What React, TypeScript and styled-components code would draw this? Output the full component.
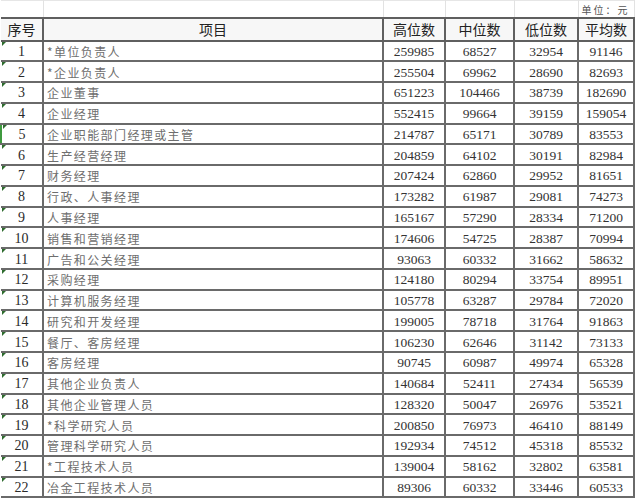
import React from "react";
import styled, { createGlobalStyle } from "styled-components";

const GlobalStyle = createGlobalStyle`
  html, body {
    margin: 0;
    padding: 0;
    background: #ffffff;
    overflow: hidden;
  }
`;

type Row = [string, string, number, number, number, number];

const rows: Row[] = [
  ["1", "*单位负责人", 259985, 68527, 32954, 91146],
  ["2", "*企业负责人", 255504, 69962, 28690, 82693],
  ["3", "企业董事", 651223, 104466, 38739, 182690],
  ["4", "企业经理", 552415, 99664, 39159, 159054],
  ["5", "企业职能部门经理或主管", 214787, 65171, 30789, 83553],
  ["6", "生产经营经理", 204859, 64102, 30191, 82984],
  ["7", "财务经理", 207424, 62860, 29952, 81651],
  ["8", "行政、人事经理", 173282, 61987, 29081, 74273],
  ["9", "人事经理", 165167, 57290, 28334, 71200],
  ["10", "销售和营销经理", 174606, 54725, 28387, 70994],
  ["11", "广告和公关经理", 93063, 60332, 31662, 58632],
  ["12", "采购经理", 124180, 80294, 33754, 89951],
  ["13", "计算机服务经理", 105778, 63287, 29784, 72020],
  ["14", "研究和开发经理", 199005, 78718, 31764, 91863],
  ["15", "餐厅、客房经理", 106230, 62646, 31142, 73133],
  ["16", "客房经理", 90745, 60987, 49974, 65328],
  ["17", "其他企业负责人", 140684, 52411, 27434, 56539],
  ["18", "其他企业管理人员", 128320, 50047, 26976, 53521],
  ["19", "*科学研究人员", 200850, 76973, 46410, 88149],
  ["20", "管理科学研究人员", 192934, 74512, 45318, 85532],
  ["21", "*工程技术人员", 139004, 58162, 32802, 63581],
  ["22", "冶金工程技术人员", 89306, 60332, 33446, 60533],
];

const colWidths = [42, 340, 62, 69, 64, 56];
const headers = ["序号", "项目", "高位数", "中位数", "低位数", "平均数"];

const Sheet = styled.table`
  border-collapse: collapse;
  table-layout: fixed;
  width: 633px;
  font-family: "Liberation Serif", "Times New Roman", serif;
`;

const TopRow = styled.tr`
  height: 17px;
`;

const TopCell = styled.td<{ $first?: boolean }>`
  border-left: ${(p) => (p.$first ? "none" : "1px solid #e2e2e2")};
  border-right: 1px solid #e2e2e2;
  border-top: 1px solid #e6e6e6;
  padding: 0 4px 0 0;
  text-align: right;
  vertical-align: bottom;
  font-family: "Noto Sans CJK SC", sans-serif;
  font-size: 10px;
  letter-spacing: 2px;
  color: #555;
  line-height: 14px;
`;

const HeadRow = styled.tr`
  height: 23px;
  background: #f7f7f7;
`;

const HeadCell = styled.th`
  border: 2px solid #5f5f5f;
  padding: 0;
  font-family: "Noto Sans CJK SC", sans-serif;
  font-weight: 400;
  font-size: 14px;
  line-height: 18px;
  color: #222;
  text-align: center;
  &:first-child {
    border-left: none;
  }
`;

const BodyRow = styled.tr`
  height: 20.77px;
`;

const IndexCell = styled.td<{ $active?: boolean }>`
  position: relative;
  border: 2px solid #6a6a6a;
  border-left: ${(p) => (p.$active ? "2px solid #3f9a3f" : "none")};
  padding: 2px 0 0;
  line-height: 16px;
  text-align: center;
  font-size: 14px;
  color: #2a2a2a;
  &::before {
    content: "";
    position: absolute;
    left: 1px;
    top: 0;
    border-top: 4px solid #2d6b2d;
    border-right: 4px solid transparent;
  }
`;

const NameCell = styled.td`
  border: 2px solid #6a6a6a;
  padding: 2px 0 0 3px;
  line-height: 16px;
  font-family: "Noto Sans CJK SC", sans-serif;
  font-size: 12px;
  letter-spacing: 1.4px;
  color: #6e6e6e;
  white-space: nowrap;
  overflow: hidden;
`;

const NumCell = styled.td`
  border: 2px solid #6a6a6a;
  padding: 2px 0 0;
  line-height: 16px;
  text-align: center;
  font-size: 13.5px;
  color: #333;
`;

export default function App() {
  return (
    <>
      <GlobalStyle />
      <Sheet>
        <colgroup>
          {colWidths.map((w, i) => (
            <col key={i} style={{ width: w }} />
          ))}
        </colgroup>
        <tbody>
          <TopRow>
            <TopCell $first />
            <TopCell />
            <TopCell />
            <TopCell />
            <TopCell />
            <TopCell>单位：元</TopCell>
          </TopRow>
          <HeadRow>
            {headers.map((h) => (
              <HeadCell key={h}>{h}</HeadCell>
            ))}
          </HeadRow>
          {rows.map(([idx, name, high, mid, low, avg]) => (
            <BodyRow key={idx}>
              <IndexCell $active={idx === "5"}>{idx}</IndexCell>
              <NameCell>{name}</NameCell>
              <NumCell>{high}</NumCell>
              <NumCell>{mid}</NumCell>
              <NumCell>{low}</NumCell>
              <NumCell>{avg}</NumCell>
            </BodyRow>
          ))}
        </tbody>
      </Sheet>
    </>
  );
}
